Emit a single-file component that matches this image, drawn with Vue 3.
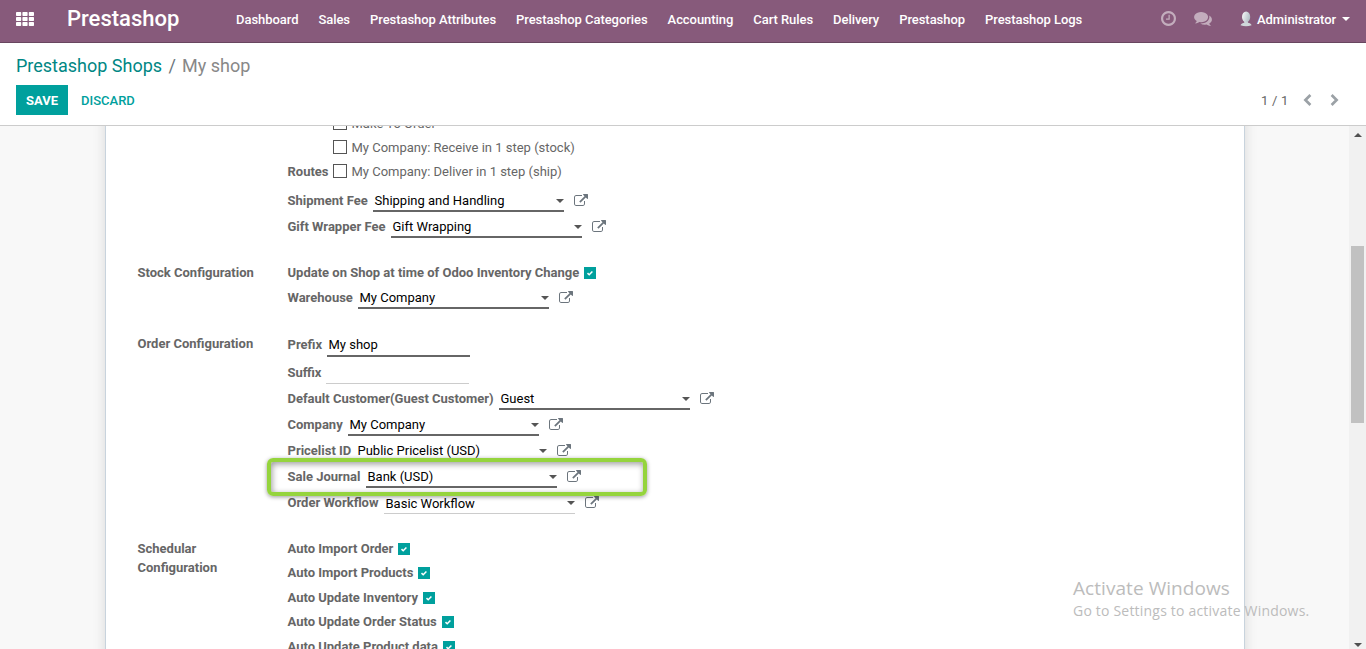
<script setup>
const menu = ['Dashboard', 'Sales', 'Prestashop Attributes', 'Prestashop Categories', 'Accounting', 'Cart Rules', 'Delivery', 'Prestashop', 'Prestashop Logs']

// labelWidth is the space between the label's left edge and its field
const feeRows = [
  { label: 'Shipment Fee', labelWidth: 85, type: 'select', value: 'Shipping and Handling', required: true },
  { label: 'Gift Wrapper Fee', labelWidth: 103, type: 'select', value: 'Gift Wrapping', required: true },
]
const groups = [
  {
    title: 'Stock Configuration', kind: 'stock',
    rows: [
      { label: 'Update on Shop at time of Odoo Inventory Change', labelWidth: 296, type: 'check' },
      { label: 'Warehouse', labelWidth: 70, type: 'select', value: 'My Company', required: true },
    ],
  },
  {
    title: 'Order Configuration', kind: 'order',
    rows: [
      { label: 'Prefix', labelWidth: 39, type: 'text', value: 'My shop', required: true, tall: true },
      { label: 'Suffix', labelWidth: 38, type: 'text', value: '' },
      { label: 'Default Customer(Guest Customer)', labelWidth: 211, type: 'select', value: 'Guest', required: true },
      { label: 'Company', labelWidth: 60, type: 'select', value: 'My Company', required: true },
      { label: 'Pricelist ID', labelWidth: 68, type: 'select', value: 'Public Pricelist (USD)', required: true },
      { label: 'Sale Journal', labelWidth: 78, type: 'select', value: 'Bank (USD)', required: true, highlight: true },
      { label: 'Order Workflow', labelWidth: 96, type: 'select', value: 'Basic Workflow' },
    ],
  },
  {
    title: 'Schedular Configuration', kind: 'schedule',
    rows: [
      { label: 'Auto Import Order', labelWidth: 110, type: 'check' },
      { label: 'Auto Import Products', labelWidth: 130, type: 'check' },
      { label: 'Auto Update Inventory', labelWidth: 135, type: 'check' },
      { label: 'Auto Update Order Status', labelWidth: 154, type: 'check' },
      { label: 'Auto Update Product data', labelWidth: 155, type: 'check' },
    ],
  },
]
const allGroups = [{ title: '', kind: 'fees', rows: feeRows }, ...groups]
</script>

<template>
  <div class="app">
    <header class="navbar">
      <svg class="apps" viewBox="0 0 18 14">
        <template v-for="r in 3" :key="r">
          <rect v-for="c in 3" :key="c" :x="(c - 1) * 6.4" :y="(r - 1) * 5" width="5.2" height="4" rx="0.7" />
        </template>
      </svg>
      <span class="brand">Prestashop</span>
      <nav class="menu"><a v-for="m in menu" :key="m">{{ m }}</a></nav>
      <div class="systray">
        <svg class="clock" viewBox="0 128 1536 1536"><path d="M896 544v448q0 14-9 23t-23 9h-320q-14 0-23-9t-9-23v-64q0-14 9-23t23-9h224v-352q0-14 9-23t23-9h64q14 0 23 9t9 23zm416 352q0-148-73-273t-198-198-273-73-273 73-198 198-73 273 73 273 198 198 273 73 273-73 198-198 73-273zm224 0q0 209-103 385.5t-279.5 279.5-385.5 103-385.5-103-279.5-279.5-103-385.5 103-385.5 279.5-279.5 385.5-103 385.5 103 279.5 279.5 103 385.5z" /></svg>
        <svg class="comments" viewBox="0 256 1792 1408"><path d="M1408 768q0 139-94 257t-256.5 186.5-353.5 68.5q-86 0-176-16-124 88-278 128-36 9-86 16h-3q-11 0-20.5-8t-11.5-21q-1-3-1-6.5t.5-6.5 2-6l2.5-5 3.5-5.5 4-5 4.5-5 4-4.5q5-6 23-25t26-29.5 22.5-29 25-38.5 20.5-44q-124-72-195-177t-71-224q0-139 94-257t256.5-186.5 353.5-68.5 353.5 68.5 256.5 186.5 94 257zm384 256q0 120-71 224.5t-195 176.5q10 24 20.5 44t25 38.5 22.5 29 26 29.5 23 25q1 1 4 4.5t4.5 5 4 5 3.5 5.5l2.5 5 2 6 .5 6.5-1 6.5q-3 14-13 22t-22 7q-50-7-86-16-154-40-278-128-90 16-176 16-271 0-472-132 58 4 88 4 161 0 309-45t264-129q125-92 192-212t67-254q0-77-23-152 129 71 204 178t75 230z" /></svg>
        <svg class="avatar" viewBox="0 0 12 16">
          <defs>
            <linearGradient id="skin" x1="0" x2="1" y1="0" y2="0.4"><stop offset="0" stop-color="#fbfcfc" /><stop offset="1" stop-color="#b3bfc6" /></linearGradient>
          </defs>
          <path d="M0.5 14.3C1 12.6 3 12 4.2 11.8L4.6 10h3l0.4 1.8c1.4 0.2 3.2 0.8 3.6 2.5Q6 16.2 0.5 14.3z" fill="#cfd7da" />
          <ellipse cx="6.1" cy="5.9" rx="4.1" ry="5.5" fill="url(#skin)" />
        </svg>
        <span class="user">Administrator</span>
        <span class="caret light"></span>
      </div>
    </header>

    <section class="control">
      <div class="crumbs"><a>Prestashop Shops</a><span class="slash">/</span><span class="here">My shop</span></div>
      <div class="actions">
        <button class="save">SAVE</button>
        <button class="discard">DISCARD</button>
        <span class="pager">1 / 1</span>
        <svg class="chev prev" viewBox="0 0 9 12"><path d="M7.4 1 2.4 6l5 5" /></svg>
        <svg class="chev" viewBox="0 0 9 12"><path d="M1.6 1l5 5-5 5" /></svg>
      </div>
    </section>

    <main class="content">
      <div class="sheet">
        <div class="routes">
          <span class="label">Routes</span>
          <ul>
            <li><i class="box"></i>Make To Order</li>
            <li><i class="box"></i>My Company: Receive in 1 step (stock)</li>
            <li><i class="box"></i>My Company: Deliver in 1 step (ship)</li>
          </ul>
        </div>
        <section v-for="g in allGroups" :key="g.kind" class="group" :class="g.kind">
          <h2>{{ g.title }}</h2>
          <div class="rows">
            <div v-for="row in g.rows" :key="row.label" class="row" :class="[row.type, { tall: row.tall }]">
              <span class="label" :style="{ width: row.labelWidth + 'px' }">{{ row.label }}</span>
              <span v-if="row.type === 'check'" class="checked">
                <svg viewBox="0 0 12 12"><path d="M3.5 6.1l1.7 1.6 3.2-3.3" /></svg>
              </span>
              <template v-else>
                <span class="field" :class="{ required: row.required }"><span class="value">{{ row.value }}</span><i v-if="row.type === 'select'" class="caret"></i></span>
                <svg v-if="row.type === 'select'" class="ext" viewBox="0 0 1792 1600"><path d="M1408 928v320q0 119-84.5 203.5t-203.5 84.5h-832q-119 0-203.5-84.5t-84.5-203.5v-832q0-119 84.5-203.5t203.5-84.5h704q14 0 23 9t9 23v64q0 14-9 23t-23 9h-704q-66 0-113 47t-47 113v832q0 66 47 113t113 47h832q66 0 113-47t47-113v-320q0-14 9-23t23-9h64q14 0 23 9t9 23zm384-864v512q0 26-19 45t-45 19-45-19l-176-176-652 652q-10 10-23 10t-23-10l-114-114q-10-10-10-23t10-23l652-652-176-176q-19-19-19-45t19-45 45-19h512q26 0 45 19t19 45z" /></svg>
              </template>
              <div v-if="row.highlight" class="highlight"></div>
            </div>
          </div>
        </section>
      </div>
      <div class="scrollbar">
        <i class="arrow up"></i>
        <i class="thumb"></i>
        <i class="arrow down"></i>
      </div>
    </main>
    <div class="watermark">
      <div class="big">Activate Windows</div>
      <div class="small">Go to Settings to activate Windows.</div>
    </div>
  </div>
</template>

<style>
html, body { overflow: hidden; }
</style>

<style scoped>
* { box-sizing: border-box; }
.app { position: relative; width: 1366px; height: 649px; overflow: hidden; display: flex; flex-direction: column; background: #fff; font: 13px/19px Roboto, "Liberation Sans", sans-serif; color: #666; }
.navbar { height: 43px; flex: none; display: flex; align-items: center; padding: 0 16px 4px; background: #875a7b; border-bottom: 1px solid #68465f; color: #fff; }
.apps { width: 18px; height: 14px; fill: #fff; margin-top: -1px; }
.brand { width: 169px; margin-left: 33px; font-size: 22px; font-weight: 500; line-height: 30px; }
.menu { display: flex; gap: 20px; font-weight: 500; letter-spacing: -.055px; }
.menu a { white-space: nowrap; }
.systray { margin-left: auto; display: flex; align-items: center; font-weight: 500; }
.clock { width: 15px; height: 15px; fill: #c3adbd; margin: -2px 18px 0 0; }
.comments { width: 18px; height: 14px; fill: #c3adbd; margin-right: 28px; margin-top: -1px; }
.avatar { width: 12px; height: 16px; margin-right: 5px; }
.user { width: 85px; letter-spacing: -.05px; }
.caret { display: block; width: 0; height: 0; border: 4px solid transparent; border-top-color: #555; border-bottom: 0; }
.caret.light { border-top-color: #fff; }
.control { height: 83px; flex: none; padding: 12px 16px 0; border-bottom: 1px solid #ccc; }
.crumbs { font-size: 18px; line-height: 22px; display: flex; color: #888; }
.crumbs a { color: #008784; }
.crumbs .slash { padding: 0 6px 0 6.5px; color: #6c757d; }
.actions { display: flex; align-items: center; margin-top: 8px; height: 30px; padding-right: 7px; }
button { border: 0; background: none; font: 500 13px/30px Roboto, "Liberation Sans", sans-serif; padding: 2px 0 0; height: 30px; line-height: 28px; }
.save { width: 52px; background: #00a09d; color: #fff; font-weight: 700; }
.discard { margin-left: 13px; color: #00a09d; }
.pager { margin-left: auto; width: 42px; letter-spacing: .2px; }
.chev { width: 9px; height: 12px; fill: none; stroke: #9ba1a6; stroke-width: 2.7; margin-right: 4px; }
.chev.prev { margin-right: 18px; }
.content { flex: 1; min-height: 0; display: flex; background: #f8f8f8; overflow: hidden; }
.sheet { width: 1140px; height: 620px; margin: -40px 0 0 105px; padding: 40px 0 0 31.5px; background: #fff; border: solid #c8d3dd; border-width: 0 1px; box-shadow: 0 0 12px rgba(0, 0, 0, .13); flex: none; }
.routes { display: flex; align-items: flex-end; height: 72px; margin: -15px 0 5px 150px; }
.routes .label { width: 45.5px; height: 24px; line-height: 25px; }
.routes ul { list-style: none; margin: 0; padding: 0; }
.routes li { display: flex; align-items: center; height: 24px; white-space: nowrap; }
.box { width: 14px; height: 14px; border: 1px solid #555; margin-right: 4.5px; }
.label { font-weight: 700; white-space: nowrap; flex: none; }
.group { display: flex; }
.group h2 { width: 150px; margin: 3px 0 0; padding-right: 40px; font-size: 13px; line-height: 19px; font-weight: 700; flex: none; }
.group.stock h2, .group.order h2 { padding-right: 0; }
.group.stock, .group.order, .group.schedule { margin-top: 20px; }
.rows { flex: 1; }
.schedule .rows { padding-top: .6px; }
.row { position: relative; display: flex; align-items: center; height: 26px; }
.fees .row .label { padding-bottom: 2px; }
.row.check { height: 24.5px; }
.row.text { height: 27px; }
.row.tall { height: 28px; }
.field { align-self: flex-end; display: flex; align-items: center; justify-content: space-between; width: 191px; height: 22px; margin-left: .5px; margin-bottom: 2px; padding: 0 0 0 1.5px; border-bottom: 1px solid #ccc; color: #000; line-height: 19px; }
.field.required { border-bottom: 2px solid #666; }
.text .field { width: 143px; height: 23px; }
.stock .value, .order .select .value { padding-top: 2px; }
.fees .value { padding-top: 1px; }
.select .field .caret { margin-top: 2px; }
.ext { width: 14px; height: 12.5px; margin-left: 10px; margin-top: -1px; fill: #6c757d; }
.checked { width: 12px; height: 12px; margin-left: .5px; background: #00a09d; margin-top: 1px; }
.checked svg { display: block; fill: none; stroke: #fff; stroke-width: 1.5; }
.highlight { position: absolute; left: -21px; top: -6px; width: 380px; height: 38px; border: 4px solid #95d43d; border-radius: 6px; box-shadow: 0 1px 4px rgba(0,0,0,.4), inset 1px 2px 6px rgba(0,0,0,.4); z-index: 1; }
.scrollbar { width: 17px; margin-left: auto; background: #f1f1f1; display: flex; flex-direction: column; align-items: center; }
.thumb { width: 13px; height: 177px; background: #c1c1c1; margin-top: 109px; }
.arrow { border: 4px solid transparent; }
.arrow.up { border-bottom-color: #505050; border-top: 0; margin-top: 7px; }
.arrow.down { border-top-color: #505050; border-bottom: 0; margin: auto 0 2px; }
.watermark { position: absolute; left: 1073px; top: 576px; font-family: "Open Sans", "Noto Sans", sans-serif; color: #bcbcbc; white-space: nowrap; }
.big { font-size: 19px; line-height: 25px; letter-spacing: .06px; }
.small { font-size: 14px; line-height: 20px; letter-spacing: .2px; }
</style>
